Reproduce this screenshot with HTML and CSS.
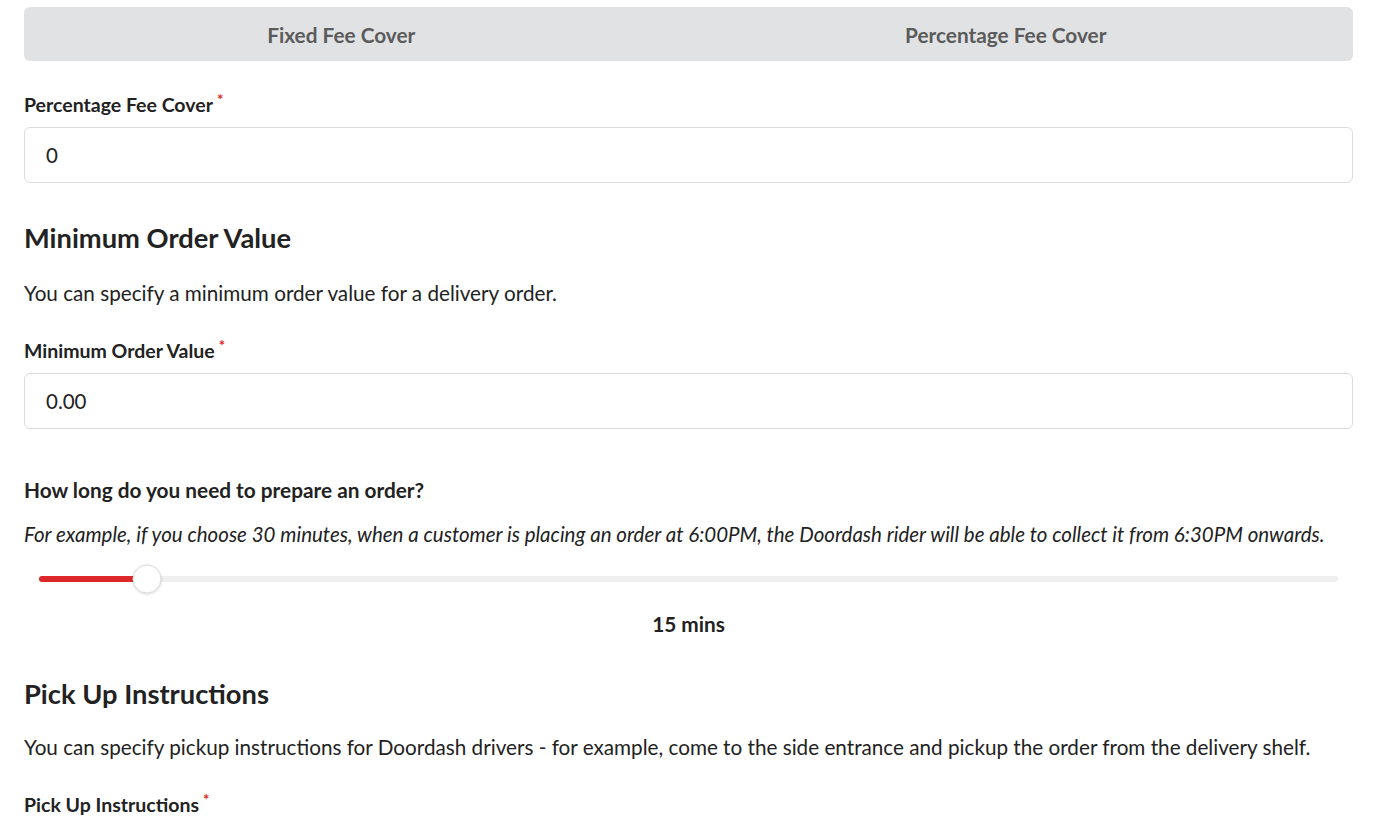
FILE: index.html
```html
<!DOCTYPE html>
<html lang="en">
<head>
    <meta charset="UTF-8">
    <meta name="viewport" content="width=device-width, initial-scale=1.0">
    <title>Delivery Settings</title>
    <link rel="stylesheet" href="styles.css">
</head>
<body>
    <div class="page">
        <!-- Fee cover tabs -->
        <div class="tabs">
            <div class="tab">Fixed Fee Cover</div>
            <div class="tab">Percentage Fee Cover</div>
        </div>

        <label class="field-label first">Percentage Fee Cover<span class="req">*</span></label>
        <input class="field-input" type="text" value="0">

        <!-- Minimum order -->
        <h2 class="section-title">Minimum Order Value</h2>
        <p class="section-text">You can specify a minimum order value for a delivery order.</p>

        <label class="field-label">Minimum Order Value<span class="req">*</span></label>
        <input class="field-input" type="text" value="0.00">

        <!-- Preparation time -->
        <div class="question">How long do you need to prepare an order?</div>
        <p class="hint">For example, if you choose 30 minutes, when a customer is placing an order at 6:00PM, the Doordash rider will be able to collect it from 6:30PM onwards.</p>

        <div class="slider">
            <div class="track">
                <div class="fill" style="width: 8.33%"></div>
                <div class="thumb" style="left: 8.33%"></div>
            </div>
        </div>
        <div class="slider-value">15 mins</div>

        <!-- Pick up -->
        <h2 class="section-title pickup">Pick Up Instructions</h2>
        <p class="section-text pickup-text">You can specify pickup instructions for Doordash drivers - for example, come to the side entrance and pickup the order from the delivery shelf.</p>

        <label class="field-label">Pick Up Instructions<span class="req">*</span></label>
    </div>
</body>
</html>
```

FILE: styles.css
```css
body {
    margin: 0;
    font-family: Lato, "Open Sans", sans-serif;
    color: #222;
    background: #fff;
}
.page {
    padding: 7px 22px 40px 24px;
}
.tabs {
    display: flex;
    height: 54px;
    background-color: #e1e2e4;
    border-radius: 6px;
}
.tab {
    flex: 1;
    display: flex;
    align-items: center;
    justify-content: center;
    padding-right: 30px;
    font-size: 20.8px;
    font-weight: 700;
    color: #5b5b5b;
}
.field-label {
    display: block;
    margin-top: 32px;
    font-size: 19.5px;
    line-height: 24px;
    font-weight: 700;
    color: #222;
}
.req {
    color: #e02424;
    font-size: 15px;
    vertical-align: top;
    position: relative;
    top: -6px;
    margin-left: 4px;
}
.field-input {
    display: block;
    box-sizing: border-box;
    width: 100%;
    height: 56px;
    margin-top: 10px;
    padding: 0 21px;
    border: 1px solid #dcdcdc;
    border-radius: 6px;
    font-family: inherit;
    font-size: 20.5px;
    color: #222;
    outline: none;
}
.section-title {
    margin: 39px 0 0;
    font-size: 27.3px;
    line-height: 32px;
    font-weight: 700;
    color: #222;
}
.section-text {
    margin: 25px 0 0;
    font-size: 20.7px;
    line-height: 28px;
    color: #222;
}
.question {
    margin-top: 49px;
    font-size: 20.8px;
    line-height: 24px;
    font-weight: 700;
}
.hint {
    margin: 18px 0 0;
    font-size: 20.5px;
    line-height: 28px;
    font-style: italic;
    color: #222;
}
.slider {
    margin-top: 16px;
    height: 30px;
    padding: 0 15px;
    display: flex;
    align-items: center;
}
.track {
    position: relative;
    width: 100%;
    height: 6px;
    background-color: #efefef;
    border-radius: 3px;
}
.fill {
    height: 100%;
    background-color: #dc2828;
    border-radius: 3px;
}
.thumb {
    position: absolute;
    top: 50%;
    width: 29px;
    height: 29px;
    box-sizing: border-box;
    background: #fff;
    border: 1px solid #dadada;
    border-radius: 50%;
    box-shadow: 0 1px 3px rgba(0, 0, 0, 0.12);
    transform: translate(-50%, -50%);
}
.slider-value {
    margin-top: 16px;
    text-align: center;
    font-size: 20.8px;
    line-height: 28px;
    font-weight: 700;
}
.section-title.pickup {
    margin-top: 40px;
}
.section-text.pickup-text {
    margin-top: 23px;
}
```
